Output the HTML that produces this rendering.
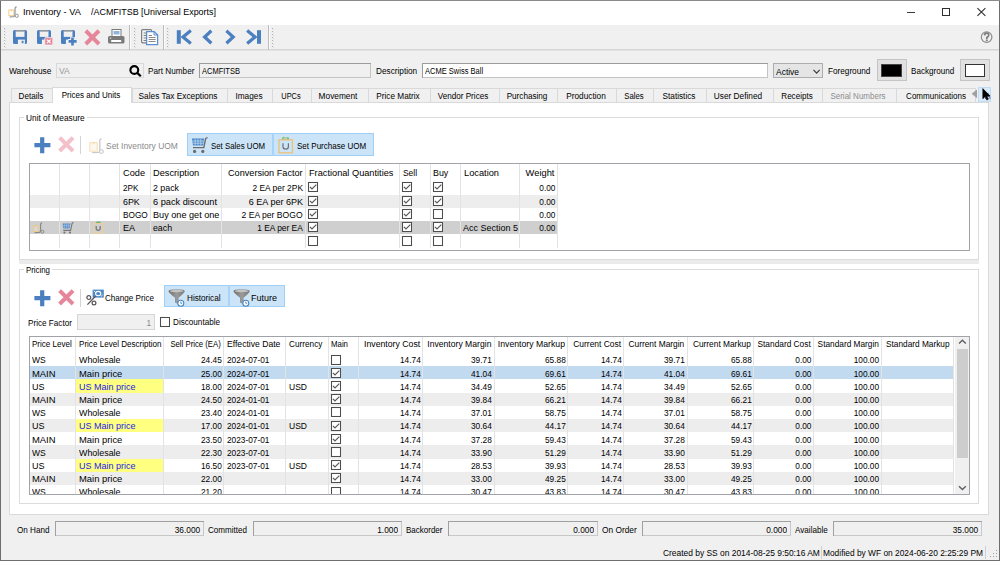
<!DOCTYPE html>
<html><head><meta charset="utf-8"><title>Inventory</title>
<style>
html,body{margin:0;padding:0;width:1000px;height:561px;overflow:hidden;background:#f0f0f0}
body{position:relative;font-family:"Liberation Sans", sans-serif}
.a{position:absolute}
.t{position:absolute;white-space:nowrap;font-family:"Liberation Sans", sans-serif}
svg.a{overflow:visible}
</style></head><body>
<div class="a" style="left:0.00px;top:0.00px;width:1000.00px;height:561.00px;background:#f0f0f0;"></div>
<div class="a" style="left:1.00px;top:1.00px;width:998.00px;height:24.00px;background:#ffffff;"></div>
<svg class="a" style="left:8px;top:6px" width="12" height="13" viewBox="0 0 12 13"><rect x="0.8" y="4" width="5" height="5.6" fill="#fff" stroke="#f5cc85" stroke-width="0.9"/><rect x="2.8" y="3.6" width="1" height="1.6" fill="#f0b860"/><path d="M8.6 1 Q7 1 7 2.8 L7 8.8 Q7 10.2 5.8 10.6 L1.6 10.8" fill="none" stroke="#9a9a9a" stroke-width="1.3"/><circle cx="8.8" cy="9.8" r="1.6" fill="#fff" stroke="#9a9a9a" stroke-width="1"/></svg>
<div class="t" style="top:7.30px;font-size:9.8px;line-height:9.8px;color:#000;transform:scaleX(0.9420);left:23.40px;transform-origin:0 0;">Inventory - VA</div>
<div class="t" style="top:7.30px;font-size:9.8px;line-height:9.8px;color:#000;transform:scaleX(0.9109);left:90.60px;transform-origin:0 0;">/ACMFITSB [Universal Exports]</div>
<div class="a" style="left:907.00px;top:12.00px;width:8.00px;height:1.00px;background:#3a3a3a;"></div>
<div class="a" style="left:942.00px;top:8.00px;width:8.00px;height:8.00px;box-shadow:inset 0 0 0 1px #2e2e2e;"></div>
<svg class="a" style="left:977px;top:8px" width="9" height="8" viewBox="0 0 9 8"><path d="M0.4 0.2 L8.4 7.8 M8.4 0.2 L0.4 7.8" stroke="#2a2a2a" stroke-width="1.05"/></svg>
<div class="a" style="left:0.00px;top:0.00px;width:1.00px;height:561.00px;background:#6e6e6e;"></div>
<div class="a" style="left:999.00px;top:0.00px;width:1.00px;height:561.00px;background:#6e6e6e;"></div>
<div class="a" style="left:0.00px;top:0.00px;width:1000.00px;height:1.00px;background:#8a8a8a;"></div>
<div class="a" style="left:0.00px;top:560.00px;width:1000.00px;height:1.00px;background:#6e6e6e;"></div>
<div class="a" style="left:1.00px;top:25.00px;width:998.00px;height:24.00px;background:#f0f0f0;"></div>
<div class="a" style="left:1.00px;top:49.00px;width:998.00px;height:1.00px;background:#d6d6d6;"></div>
<div class="a" style="left:1.00px;top:50.00px;width:998.00px;height:1.00px;background:#e2e2e2;"></div>
<div class="a" style="left:4.00px;top:28.00px;width:1.00px;height:1.00px;background:#b0b0b0;"></div>
<div class="a" style="left:5.00px;top:29.00px;width:1.00px;height:1.00px;background:#dedede;"></div>
<div class="a" style="left:4.00px;top:31.00px;width:1.00px;height:1.00px;background:#b0b0b0;"></div>
<div class="a" style="left:5.00px;top:32.00px;width:1.00px;height:1.00px;background:#dedede;"></div>
<div class="a" style="left:4.00px;top:34.00px;width:1.00px;height:1.00px;background:#b0b0b0;"></div>
<div class="a" style="left:5.00px;top:35.00px;width:1.00px;height:1.00px;background:#dedede;"></div>
<div class="a" style="left:4.00px;top:37.00px;width:1.00px;height:1.00px;background:#b0b0b0;"></div>
<div class="a" style="left:5.00px;top:38.00px;width:1.00px;height:1.00px;background:#dedede;"></div>
<div class="a" style="left:4.00px;top:40.00px;width:1.00px;height:1.00px;background:#b0b0b0;"></div>
<div class="a" style="left:5.00px;top:41.00px;width:1.00px;height:1.00px;background:#dedede;"></div>
<div class="a" style="left:4.00px;top:43.00px;width:1.00px;height:1.00px;background:#b0b0b0;"></div>
<div class="a" style="left:5.00px;top:44.00px;width:1.00px;height:1.00px;background:#dedede;"></div>
<div class="a" style="left:4.00px;top:46.00px;width:1.00px;height:1.00px;background:#b0b0b0;"></div>
<div class="a" style="left:5.00px;top:47.00px;width:1.00px;height:1.00px;background:#dedede;"></div>
<div class="a" style="left:134.00px;top:28.00px;width:1.00px;height:1.00px;background:#b0b0b0;"></div>
<div class="a" style="left:135.00px;top:29.00px;width:1.00px;height:1.00px;background:#dedede;"></div>
<div class="a" style="left:134.00px;top:31.00px;width:1.00px;height:1.00px;background:#b0b0b0;"></div>
<div class="a" style="left:135.00px;top:32.00px;width:1.00px;height:1.00px;background:#dedede;"></div>
<div class="a" style="left:134.00px;top:34.00px;width:1.00px;height:1.00px;background:#b0b0b0;"></div>
<div class="a" style="left:135.00px;top:35.00px;width:1.00px;height:1.00px;background:#dedede;"></div>
<div class="a" style="left:134.00px;top:37.00px;width:1.00px;height:1.00px;background:#b0b0b0;"></div>
<div class="a" style="left:135.00px;top:38.00px;width:1.00px;height:1.00px;background:#dedede;"></div>
<div class="a" style="left:134.00px;top:40.00px;width:1.00px;height:1.00px;background:#b0b0b0;"></div>
<div class="a" style="left:135.00px;top:41.00px;width:1.00px;height:1.00px;background:#dedede;"></div>
<div class="a" style="left:134.00px;top:43.00px;width:1.00px;height:1.00px;background:#b0b0b0;"></div>
<div class="a" style="left:135.00px;top:44.00px;width:1.00px;height:1.00px;background:#dedede;"></div>
<div class="a" style="left:134.00px;top:46.00px;width:1.00px;height:1.00px;background:#b0b0b0;"></div>
<div class="a" style="left:135.00px;top:47.00px;width:1.00px;height:1.00px;background:#dedede;"></div>
<div class="a" style="left:167.00px;top:28.00px;width:1.00px;height:1.00px;background:#b0b0b0;"></div>
<div class="a" style="left:168.00px;top:29.00px;width:1.00px;height:1.00px;background:#dedede;"></div>
<div class="a" style="left:167.00px;top:31.00px;width:1.00px;height:1.00px;background:#b0b0b0;"></div>
<div class="a" style="left:168.00px;top:32.00px;width:1.00px;height:1.00px;background:#dedede;"></div>
<div class="a" style="left:167.00px;top:34.00px;width:1.00px;height:1.00px;background:#b0b0b0;"></div>
<div class="a" style="left:168.00px;top:35.00px;width:1.00px;height:1.00px;background:#dedede;"></div>
<div class="a" style="left:167.00px;top:37.00px;width:1.00px;height:1.00px;background:#b0b0b0;"></div>
<div class="a" style="left:168.00px;top:38.00px;width:1.00px;height:1.00px;background:#dedede;"></div>
<div class="a" style="left:167.00px;top:40.00px;width:1.00px;height:1.00px;background:#b0b0b0;"></div>
<div class="a" style="left:168.00px;top:41.00px;width:1.00px;height:1.00px;background:#dedede;"></div>
<div class="a" style="left:167.00px;top:43.00px;width:1.00px;height:1.00px;background:#b0b0b0;"></div>
<div class="a" style="left:168.00px;top:44.00px;width:1.00px;height:1.00px;background:#dedede;"></div>
<div class="a" style="left:167.00px;top:46.00px;width:1.00px;height:1.00px;background:#b0b0b0;"></div>
<div class="a" style="left:168.00px;top:47.00px;width:1.00px;height:1.00px;background:#dedede;"></div>
<div class="a" style="left:272.00px;top:28.00px;width:1.00px;height:1.00px;background:#b0b0b0;"></div>
<div class="a" style="left:273.00px;top:29.00px;width:1.00px;height:1.00px;background:#dedede;"></div>
<div class="a" style="left:272.00px;top:31.00px;width:1.00px;height:1.00px;background:#b0b0b0;"></div>
<div class="a" style="left:273.00px;top:32.00px;width:1.00px;height:1.00px;background:#dedede;"></div>
<div class="a" style="left:272.00px;top:34.00px;width:1.00px;height:1.00px;background:#b0b0b0;"></div>
<div class="a" style="left:273.00px;top:35.00px;width:1.00px;height:1.00px;background:#dedede;"></div>
<div class="a" style="left:272.00px;top:37.00px;width:1.00px;height:1.00px;background:#b0b0b0;"></div>
<div class="a" style="left:273.00px;top:38.00px;width:1.00px;height:1.00px;background:#dedede;"></div>
<div class="a" style="left:272.00px;top:40.00px;width:1.00px;height:1.00px;background:#b0b0b0;"></div>
<div class="a" style="left:273.00px;top:41.00px;width:1.00px;height:1.00px;background:#dedede;"></div>
<div class="a" style="left:272.00px;top:43.00px;width:1.00px;height:1.00px;background:#b0b0b0;"></div>
<div class="a" style="left:273.00px;top:44.00px;width:1.00px;height:1.00px;background:#dedede;"></div>
<div class="a" style="left:272.00px;top:46.00px;width:1.00px;height:1.00px;background:#b0b0b0;"></div>
<div class="a" style="left:273.00px;top:47.00px;width:1.00px;height:1.00px;background:#dedede;"></div>
<div class="a" style="left:129.00px;top:25.00px;width:1.00px;height:25.00px;background:#bdbdbd;"></div>
<div class="a" style="left:130.00px;top:25.00px;width:1.00px;height:24.00px;background:#fafafa;"></div>
<div class="a" style="left:163.00px;top:25.00px;width:1.00px;height:25.00px;background:#bdbdbd;"></div>
<div class="a" style="left:164.00px;top:25.00px;width:1.00px;height:24.00px;background:#fafafa;"></div>
<div class="a" style="left:268.00px;top:25.00px;width:1.00px;height:25.00px;background:#bdbdbd;"></div>
<div class="a" style="left:269.00px;top:25.00px;width:1.00px;height:24.00px;background:#fafafa;"></div>
<svg class="a" style="left:13px;top:30px" width="14" height="14" viewBox="0 0 14 14"><rect x="0" y="0" width="14" height="14" rx="1.6" fill="#4a7fc0"/><rect x="2.7" y="0.5" width="8.8" height="6.4" fill="#f0f0f0"/><rect x="2.7" y="0.5" width="8.8" height="1" fill="#7a7a7a"/><rect x="4.9" y="9.6" width="7" height="4.4" fill="#f0f0f0"/><rect x="8.7" y="10.8" width="1.8" height="2.4" fill="#4a7fc0"/></svg>
<svg class="a" style="left:37px;top:30px" width="16" height="15" viewBox="0 0 16 15"><rect x="0" y="0" width="14" height="14" rx="1.6" fill="#4a7fc0"/><rect x="2.7" y="0.5" width="8.8" height="6.4" fill="#f0f0f0"/><rect x="2.7" y="0.5" width="8.8" height="1" fill="#7a7a7a"/><rect x="4.9" y="9.6" width="7" height="4.4" fill="#f0f0f0"/><rect x="7.8" y="7.6" width="8" height="7.4" rx="0.8" fill="#e9869b" stroke="#f0f0f0" stroke-width="0.8"/><path d="M10 9.6 L13.6 13 M13.6 9.6 L10 13" stroke="#fff" stroke-width="1.2"/></svg>
<svg class="a" style="left:61px;top:30px" width="16" height="16" viewBox="0 0 16 16"><rect x="0" y="0" width="14" height="14" rx="1.6" fill="#4a7fc0"/><rect x="2.7" y="0.5" width="8.8" height="6.4" fill="#f0f0f0"/><rect x="2.7" y="0.5" width="8.8" height="1" fill="#7a7a7a"/><rect x="4.9" y="9.6" width="7" height="4.4" fill="#f0f0f0"/><path d="M7 11.4 H16 M11.5 6.9 V16" stroke="#f0f0f0" stroke-width="4.6"/><path d="M7.6 11.4 H15.6 M11.5 7.4 V15.6" stroke="#4a7fc0" stroke-width="2.6"/></svg>
<svg class="a" style="left:85px;top:30px" width="15" height="15" viewBox="0 0 15 15"><path d="M2.2 2.2 L12.6 12.6 M12.6 2.2 L2.2 12.6" stroke="#e6869b" stroke-width="4" stroke-linecap="square"/></svg>
<svg class="a" style="left:108px;top:29px" width="17" height="15" viewBox="0 0 17 15"><rect x="4" y="0.5" width="9" height="7" fill="#fff" stroke="#7a7a7a" stroke-width="1"/><rect x="5.5" y="2" width="6" height="3.5" fill="#8fb4dd"/><rect x="0" y="7" width="16.5" height="7.6" rx="1.6" fill="#7a7a7a"/><rect x="3.2" y="11" width="10" height="2" fill="#fff"/><rect x="2" y="8.6" width="1.2" height="1" fill="#fff"/></svg>
<svg class="a" style="left:141px;top:29px" width="18" height="17" viewBox="0 0 18 17"><rect x="0.6" y="0.6" width="10" height="13.2" rx="1" fill="#f4f4f4" stroke="#808080" stroke-width="1.2"/><path d="M2.6 4 H5 M2.6 6.5 H5 M2.6 9 H5 M2.6 11.5 H5" stroke="#808080" stroke-width="1"/><path d="M5.6 2.6 H13.2 L16.6 6 V15.6 H5.6 Z" fill="#fff" stroke="#5b8fcd" stroke-width="1.3"/><path d="M13 2.6 V6 H16.6" fill="none" stroke="#5b8fcd" stroke-width="1"/><path d="M7.6 6.5 H11 M7.6 8.5 H14.6 M7.6 10.5 H14.6 M7.6 12.5 H14.6" stroke="#8a8a8a" stroke-width="1.1"/></svg>
<svg class="a" style="left:176px;top:30px" width="16" height="14" viewBox="0 0 16 14"><rect x="0.8" y="0.2" width="4" height="13.6" fill="#4a7fc0"/><path d="M13.6 1.6 L7 7 L13.6 12.4" fill="none" stroke="#4a7fc0" stroke-width="3.2" stroke-linecap="square"/></svg>
<svg class="a" style="left:201px;top:30px" width="12" height="14" viewBox="0 0 12 14"><path d="M9.2 1.8 L3.6 7 L9.2 12.2" fill="none" stroke="#4a7fc0" stroke-width="3.2" stroke-linecap="square"/></svg>
<svg class="a" style="left:225px;top:30px" width="12" height="14" viewBox="0 0 12 14"><path d="M2.6 1.8 L8.2 7 L2.6 12.2" fill="none" stroke="#4a7fc0" stroke-width="3.2" stroke-linecap="square"/></svg>
<svg class="a" style="left:246px;top:30px" width="16" height="14" viewBox="0 0 16 14"><rect x="11" y="0.2" width="4" height="13.6" fill="#4a7fc0"/><path d="M2.4 1.6 L9 7 L2.4 12.4" fill="none" stroke="#4a7fc0" stroke-width="3.2" stroke-linecap="square"/></svg>
<svg class="a" style="left:980px;top:30px" width="14" height="14" viewBox="0 0 14 14"><circle cx="6.6" cy="7.1" r="5.3" fill="none" stroke="#8c8c8c" stroke-width="1.2"/><path d="M4.6 5.4 Q4.6 3.2 6.7 3.2 Q8.8 3.2 8.7 5.2 Q8.6 6.6 6.8 7.5 V9" fill="none" stroke="#7c7c7c" stroke-width="1.7"/><rect x="5.9" y="9.5" width="1.8" height="1.6" fill="#7c7c7c"/></svg>
<div class="t" style="top:67.31px;font-size:9.2px;line-height:9.2px;color:#000;transform:scaleX(0.9100);left:9.00px;transform-origin:0 0;">Warehouse</div>
<div class="a" style="left:56.00px;top:63.00px;width:87.50px;height:14.70px;background:#f0f0f0;box-shadow:inset 0 0 0 1px #d9d9d9;"></div>
<div class="t" style="top:67.31px;font-size:9.2px;line-height:9.2px;color:#9a9a9a;transform:scaleX(0.9323);left:58.50px;transform-origin:0 0;">VA</div>
<svg class="a" style="left:129px;top:65px" width="13" height="12" viewBox="0 0 13 12"><circle cx="5.3" cy="5" r="3.9" fill="none" stroke="#000" stroke-width="2.1"/><path d="M8.2 7.9 L11.8 11.3" stroke="#000" stroke-width="2.2"/></svg>
<div class="t" style="top:67.31px;font-size:9.2px;line-height:9.2px;color:#000;transform:scaleX(0.8917);left:147.50px;transform-origin:0 0;">Part Number</div>
<div class="a" style="left:199.00px;top:63.00px;width:172.30px;height:15.20px;background:#f0f0f0;box-shadow:inset 1px 1px 0 #9c9c9c, inset -1px -1px 0 #c4c4c4;"></div>
<div class="t" style="top:67.31px;font-size:9.2px;line-height:9.2px;color:#000;transform:scaleX(0.8170);left:201.50px;transform-origin:0 0;">ACMFITSB</div>
<div class="t" style="top:67.31px;font-size:9.2px;line-height:9.2px;color:#000;transform:scaleX(0.8953);left:375.80px;transform-origin:0 0;">Description</div>
<div class="a" style="left:422.00px;top:63.00px;width:346.20px;height:15.00px;background:#ffffff;box-shadow:inset 1px 1px 0 #9c9c9c, inset -1px -1px 0 #c4c4c4;"></div>
<div class="t" style="top:67.31px;font-size:9.2px;line-height:9.2px;color:#000;transform:scaleX(0.8190);left:424.50px;transform-origin:0 0;">ACME Swiss Ball</div>
<div class="a" style="left:773.00px;top:63.00px;width:50.00px;height:14.80px;background:#e5e5e5;box-shadow:inset 0 0 0 1px #adadad;"></div>
<div class="t" style="top:67.51px;font-size:9.2px;line-height:9.2px;color:#000;transform:scaleX(0.9221);left:775.80px;transform-origin:0 0;">Active</div>
<svg class="a" style="left:812.5px;top:68.6px" width="8" height="6" viewBox="0 0 8 6"><path d="M0.5 0.8 L3.6 4.2 L6.7 0.8" fill="none" stroke="#3c3c3c" stroke-width="1.15"/></svg>
<div class="t" style="top:67.31px;font-size:9.2px;line-height:9.2px;color:#000;transform:scaleX(0.8915);left:828.00px;transform-origin:0 0;">Foreground</div>
<div class="a" style="left:877.00px;top:59.30px;width:29.50px;height:21.70px;background:#e1e1e1;box-shadow:inset 0 0 0 1px #c4c4c4;"></div>
<div class="a" style="left:881.00px;top:64.00px;width:21.00px;height:12.80px;background:#000;box-shadow:inset 0 0 0 1px #444;"></div>
<div class="t" style="top:67.31px;font-size:9.2px;line-height:9.2px;color:#000;transform:scaleX(0.8799);left:910.60px;transform-origin:0 0;">Background</div>
<div class="a" style="left:960.20px;top:59.30px;width:29.60px;height:21.70px;background:#e1e1e1;box-shadow:inset 0 0 0 1px #c4c4c4;"></div>
<div class="a" style="left:964.60px;top:64.00px;width:20.80px;height:13.00px;background:#fff;box-shadow:inset 0 0 0 1px #333;"></div>
<div class="a" style="left:9.00px;top:102.00px;width:980.00px;height:413.00px;background:#fff;box-shadow:inset 0 0 0 1px #dadada;"></div>
<div class="a" style="left:11.00px;top:88.00px;width:42.00px;height:15.00px;background:#f0f0f0;box-shadow:inset 0 0 0 1px #d9d9d9;"></div>
<div class="a" style="left:132.00px;top:88.00px;width:96.00px;height:15.00px;background:#f0f0f0;box-shadow:inset 0 0 0 1px #d9d9d9;"></div>
<div class="a" style="left:227.00px;top:88.00px;width:46.00px;height:15.00px;background:#f0f0f0;box-shadow:inset 0 0 0 1px #d9d9d9;"></div>
<div class="a" style="left:272.00px;top:88.00px;width:40.00px;height:15.00px;background:#f0f0f0;box-shadow:inset 0 0 0 1px #d9d9d9;"></div>
<div class="a" style="left:311.00px;top:88.00px;width:58.00px;height:15.00px;background:#f0f0f0;box-shadow:inset 0 0 0 1px #d9d9d9;"></div>
<div class="a" style="left:368.00px;top:88.00px;width:63.00px;height:15.00px;background:#f0f0f0;box-shadow:inset 0 0 0 1px #d9d9d9;"></div>
<div class="a" style="left:430.00px;top:88.00px;width:70.00px;height:15.00px;background:#f0f0f0;box-shadow:inset 0 0 0 1px #d9d9d9;"></div>
<div class="a" style="left:499.00px;top:88.00px;width:59.00px;height:15.00px;background:#f0f0f0;box-shadow:inset 0 0 0 1px #d9d9d9;"></div>
<div class="a" style="left:557.00px;top:88.00px;width:60.00px;height:15.00px;background:#f0f0f0;box-shadow:inset 0 0 0 1px #d9d9d9;"></div>
<div class="a" style="left:616.00px;top:88.00px;width:38.00px;height:15.00px;background:#f0f0f0;box-shadow:inset 0 0 0 1px #d9d9d9;"></div>
<div class="a" style="left:653.00px;top:88.00px;width:54.00px;height:15.00px;background:#f0f0f0;box-shadow:inset 0 0 0 1px #d9d9d9;"></div>
<div class="a" style="left:706.00px;top:88.00px;width:68.00px;height:15.00px;background:#f0f0f0;box-shadow:inset 0 0 0 1px #d9d9d9;"></div>
<div class="a" style="left:773.00px;top:88.00px;width:50.00px;height:15.00px;background:#f0f0f0;box-shadow:inset 0 0 0 1px #d9d9d9;"></div>
<div class="a" style="left:822.00px;top:88.00px;width:75.00px;height:15.00px;background:#f0f0f0;box-shadow:inset 0 0 0 1px #d9d9d9;"></div>
<div class="a" style="left:896.00px;top:88.00px;width:82.00px;height:15.00px;background:#f0f0f0;box-shadow:inset 0 0 0 1px #d9d9d9;"></div>
<div class="t" style="top:91.61px;font-size:9.2px;line-height:9.2px;color:#000;transform:scaleX(0.8819);left:-119.20px;width:300px;text-align:center;transform-origin:50% 0;">Details</div>
<div class="a" style="left:52.00px;top:87.00px;width:80.00px;height:16.00px;background:#fff;box-shadow:inset 0 0 0 1px #d9d9d9;"></div>
<div class="a" style="left:53.00px;top:101.00px;width:78.00px;height:2.50px;background:#fff;"></div>
<div class="t" style="top:91.21px;font-size:9.2px;line-height:9.2px;color:#000;transform:scaleX(0.8749);left:-59.05px;width:300px;text-align:center;transform-origin:50% 0;">Prices and Units</div>
<div class="t" style="top:91.61px;font-size:9.2px;line-height:9.2px;color:#000;transform:scaleX(0.9052);left:28.25px;width:300px;text-align:center;transform-origin:50% 0;">Sales Tax Exceptions</div>
<div class="t" style="top:91.61px;font-size:9.2px;line-height:9.2px;color:#000;transform:scaleX(0.8983);left:98.75px;width:300px;text-align:center;transform-origin:50% 0;">Images</div>
<div class="t" style="top:91.61px;font-size:9.2px;line-height:9.2px;color:#000;transform:scaleX(0.8075);left:140.80px;width:300px;text-align:center;transform-origin:50% 0;">UPCs</div>
<div class="t" style="top:91.61px;font-size:9.2px;line-height:9.2px;color:#000;transform:scaleX(0.9034);left:188.40px;width:300px;text-align:center;transform-origin:50% 0;">Movement</div>
<div class="t" style="top:91.61px;font-size:9.2px;line-height:9.2px;color:#000;transform:scaleX(0.8958);left:247.90px;width:300px;text-align:center;transform-origin:50% 0;">Price Matrix</div>
<div class="t" style="top:91.61px;font-size:9.2px;line-height:9.2px;color:#000;transform:scaleX(0.8835);left:313.45px;width:300px;text-align:center;transform-origin:50% 0;">Vendor Prices</div>
<div class="t" style="top:91.61px;font-size:9.2px;line-height:9.2px;color:#000;transform:scaleX(0.8843);left:377.30px;width:300px;text-align:center;transform-origin:50% 0;">Purchasing</div>
<div class="t" style="top:91.61px;font-size:9.2px;line-height:9.2px;color:#000;transform:scaleX(0.9004);left:435.65px;width:300px;text-align:center;transform-origin:50% 0;">Production</div>
<div class="t" style="top:91.61px;font-size:9.2px;line-height:9.2px;color:#000;transform:scaleX(0.8430);left:483.60px;width:300px;text-align:center;transform-origin:50% 0;">Sales</div>
<div class="t" style="top:91.61px;font-size:9.2px;line-height:9.2px;color:#000;transform:scaleX(0.8965);left:528.60px;width:300px;text-align:center;transform-origin:50% 0;">Statistics</div>
<div class="t" style="top:91.61px;font-size:9.2px;line-height:9.2px;color:#000;transform:scaleX(0.9015);left:588.45px;width:300px;text-align:center;transform-origin:50% 0;">User Defined</div>
<div class="t" style="top:91.61px;font-size:9.2px;line-height:9.2px;color:#000;transform:scaleX(0.8773);left:646.50px;width:300px;text-align:center;transform-origin:50% 0;">Receipts</div>
<div class="t" style="top:91.61px;font-size:9.2px;line-height:9.2px;color:#8d8d8d;transform:scaleX(0.8723);left:708.00px;width:300px;text-align:center;transform-origin:50% 0;">Serial Numbers</div>
<div class="t" style="top:91.61px;font-size:9.2px;line-height:9.2px;color:#000;transform:scaleX(0.8743);left:785.70px;width:300px;text-align:center;transform-origin:50% 0;">Communications</div>
<div class="a" style="left:975.00px;top:88.00px;width:1.00px;height:14.00px;background:#d9d9d9;"></div>
<div class="a" style="left:976.00px;top:88.00px;width:2.00px;height:14.00px;background:#f0f0f0;"></div>
<svg class="a" style="left:971px;top:89px" width="7" height="10" viewBox="0 0 7 10"><path d="M6 0.4 V9.2 L0.6 4.8 Z" fill="#a0a0a0"/></svg>
<div class="a" style="left:978.00px;top:87.00px;width:13.00px;height:15.00px;background:#d9eaf9;box-shadow:inset 0 0 0 1px #c2dcf3;"></div>
<div class="t" style="top:92.41px;font-size:9.2px;line-height:9.2px;color:#1a3a9a;transform:scaleX(0.8804);left:984.50px;transform-origin:0 0;">Ac</div>
<svg class="a" style="left:982px;top:88px" width="9" height="13" viewBox="0 0 9 13"><path d="M0.8 0.6 V10.8 L3.2 8.6 L4.8 12 L6.4 11.2 L4.8 8 H8 Z" fill="#000" stroke="#000" stroke-width="0.6" stroke-linejoin="round"/></svg>
<div class="a" style="left:991.00px;top:86.00px;width:8.00px;height:17.00px;background:#f0f0f0;"></div>
<div class="a" style="left:19.00px;top:117.00px;width:960.40px;height:142.80px;box-shadow:inset 0 0 0 1px #dcdcdc;"></div>
<div class="a" style="left:24.00px;top:112.00px;width:63.00px;height:10.00px;background:#fff;"></div>
<div class="t" style="top:113.61px;font-size:9.2px;line-height:9.2px;color:#000;transform:scaleX(0.9055);left:26.00px;transform-origin:0 0;">Unit of Measure</div>
<div class="a" style="left:19.20px;top:260.20px;width:960.20px;height:3.60px;background:#ebebeb;"></div>
<div class="a" style="left:19.20px;top:269.40px;width:960.20px;height:234.80px;box-shadow:inset 0 0 0 1px #dcdcdc;"></div>
<div class="a" style="left:24.00px;top:264.00px;width:28.00px;height:10.00px;background:#fff;"></div>
<div class="t" style="top:265.81px;font-size:9.2px;line-height:9.2px;color:#000;transform:scaleX(0.8535);left:25.80px;transform-origin:0 0;">Pricing</div>
<svg class="a" style="left:33.8px;top:136.5px" width="17" height="17" viewBox="0 0 17 17"><path d="M0.4 8.2 H16.4 M8.2 0.3 V16.3" stroke="#4a7fc0" stroke-width="4.2"/></svg>
<svg class="a" style="left:58.6px;top:137.4px" width="15" height="15" viewBox="0 0 15 15"><path d="M2 2 L12.6 12.6 M12.6 2 L2 12.6" stroke="#f3c0cb" stroke-width="4" stroke-linecap="square"/></svg>
<div class="a" style="left:80.00px;top:136.00px;width:1.00px;height:18.00px;background:#d4d4d4;"></div>
<svg class="a" style="left:89px;top:138px" width="16" height="17" viewBox="0 0 16 17"><rect x="0.8" y="4.6" width="7.4" height="8.6" fill="#fdf8ee" stroke="#f4dfb6" stroke-width="1"/><rect x="3.8" y="4.6" width="1.4" height="1.6" fill="#f4d9a0"/><path d="M12.6 0.8 Q10.8 0.8 10.8 2.6 L10.8 12.4 Q10.8 14 9.4 14.4 L3.2 14.6" fill="none" stroke="#c8c8c8" stroke-width="1.3"/><circle cx="12.4" cy="13.6" r="1.9" fill="#fff" stroke="#c8c8c8" stroke-width="1.1"/></svg>
<div class="t" style="top:141.81px;font-size:9.2px;line-height:9.2px;color:#8a8a8a;transform:scaleX(0.9204);left:106.30px;transform-origin:0 0;">Set Inventory UOM</div>
<div class="a" style="left:186.90px;top:133.00px;width:85.90px;height:22.60px;background:#cce4f7;box-shadow:inset 0 0 0 1px #9fcff7;"></div>
<div class="a" style="left:272.40px;top:133.00px;width:101.50px;height:22.60px;background:#cce4f7;box-shadow:inset 0 0 0 1px #9fcff7;"></div>
<div class="a" style="left:272.00px;top:133.00px;width:2.00px;height:22.60px;background:#a6d3f9;"></div>
<svg class="a" style="left:191px;top:137px" width="18" height="17" viewBox="0 0 18 17"><path d="M1 1.6 H13 L12 8.6 H2 Z" fill="#4a86c5"/><path d="M4.2 2 V8.4 M7 2 V8.4 M9.8 2 V8.4 M1.4 4 H12.8 M1.7 6.2 H12.4" stroke="#cce4f7" stroke-width="0.7"/><path d="M2 10.6 H12.8 L14.6 1.8 Q15 0.6 16.6 0.6" fill="none" stroke="#6b6b6b" stroke-width="1.4"/><circle cx="3.6" cy="14.4" r="1.6" fill="#6b6b6b"/><circle cx="11.8" cy="14.4" r="1.6" fill="#6b6b6b"/></svg>
<div class="t" style="top:141.81px;font-size:9.2px;line-height:9.2px;color:#000;transform:scaleX(0.8549);left:210.50px;transform-origin:0 0;">Set Sales UOM</div>
<svg class="a" style="left:278px;top:136px" width="16" height="18" viewBox="0 0 16 18"><path d="M3.6 3.8 L5 0.8 L10.6 1.4 L11.4 3.8 Z" fill="#6fae72"/><rect x="5.6" y="1.4" width="3.6" height="1.4" fill="#c8e2c8"/><rect x="1" y="3.8" width="13.4" height="13" fill="none" stroke="#eac27a" stroke-width="1.3"/><path d="M5 7.2 V10.8 Q5 13.2 7.7 13.2 Q10.4 13.2 10.4 10.8 V7.2" fill="none" stroke="#707070" stroke-width="1.2"/></svg>
<div class="t" style="top:141.81px;font-size:9.2px;line-height:9.2px;color:#000;transform:scaleX(0.8745);left:296.60px;transform-origin:0 0;">Set Purchase UOM</div>
<div class="a" style="left:29.00px;top:163.00px;width:941.00px;height:88.00px;background:#fff;box-shadow:inset 0 0 0 1px #a0a3a8;"></div>
<div class="a" style="left:30.00px;top:194.50px;width:527.30px;height:13.30px;background:#ededed;"></div>
<div class="a" style="left:30.00px;top:221.10px;width:527.30px;height:13.30px;background:#cfcfcf;"></div>
<div class="a" style="left:59.40px;top:164.00px;width:1.00px;height:84.00px;background:#e3e3e3;"></div>
<div class="a" style="left:89.40px;top:164.00px;width:1.00px;height:84.00px;background:#e3e3e3;"></div>
<div class="a" style="left:119.40px;top:164.00px;width:1.00px;height:84.00px;background:#e3e3e3;"></div>
<div class="a" style="left:150.00px;top:164.00px;width:1.00px;height:84.00px;background:#e3e3e3;"></div>
<div class="a" style="left:221.40px;top:164.00px;width:1.00px;height:84.00px;background:#e3e3e3;"></div>
<div class="a" style="left:305.00px;top:164.00px;width:1.00px;height:84.00px;background:#e3e3e3;"></div>
<div class="a" style="left:399.40px;top:164.00px;width:1.00px;height:84.00px;background:#e3e3e3;"></div>
<div class="a" style="left:429.60px;top:164.00px;width:1.00px;height:84.00px;background:#e3e3e3;"></div>
<div class="a" style="left:459.80px;top:164.00px;width:1.00px;height:84.00px;background:#e3e3e3;"></div>
<div class="a" style="left:519.10px;top:164.00px;width:1.00px;height:84.00px;background:#e3e3e3;"></div>
<div class="a" style="left:557.30px;top:164.00px;width:1.00px;height:84.00px;background:#e3e3e3;"></div>
<div class="t" style="top:167.76px;font-size:9.5px;line-height:9.5px;color:#000;transform:scaleX(0.9688);left:122.60px;transform-origin:0 0;">Code</div>
<div class="t" style="top:167.76px;font-size:9.5px;line-height:9.5px;color:#000;transform:scaleX(0.9723);left:153.00px;transform-origin:0 0;">Description</div>
<div class="t" style="top:167.76px;font-size:9.5px;line-height:9.5px;color:#000;transform:scaleX(0.9612);right:697.20px;text-align:right;transform-origin:100% 0;">Conversion Factor</div>
<div class="t" style="top:167.76px;font-size:9.5px;line-height:9.5px;color:#000;transform:scaleX(0.9688);left:308.60px;transform-origin:0 0;">Fractional Quantities</div>
<div class="t" style="top:167.76px;font-size:9.5px;line-height:9.5px;color:#000;transform:scaleX(0.8838);left:403.00px;transform-origin:0 0;">Sell</div>
<div class="t" style="top:167.76px;font-size:9.5px;line-height:9.5px;color:#000;transform:scaleX(0.9347);left:433.20px;transform-origin:0 0;">Buy</div>
<div class="t" style="top:167.76px;font-size:9.5px;line-height:9.5px;color:#000;transform:scaleX(0.9745);left:463.60px;transform-origin:0 0;">Location</div>
<div class="t" style="top:167.76px;font-size:9.5px;line-height:9.5px;color:#000;transform:scaleX(0.9798);right:445.20px;text-align:right;transform-origin:100% 0;">Weight</div>
<div class="t" style="top:183.36px;font-size:9.5px;line-height:9.5px;color:#000;transform:scaleX(0.8576);left:122.60px;transform-origin:0 0;">2PK</div>
<div class="t" style="top:183.36px;font-size:9.5px;line-height:9.5px;color:#000;transform:scaleX(0.9290);left:153.00px;transform-origin:0 0;">2 pack</div>
<div class="t" style="top:183.36px;font-size:9.5px;line-height:9.5px;color:#000;transform:scaleX(0.8872);right:697.20px;text-align:right;transform-origin:100% 0;">2 EA per 2PK</div>
<svg class="a" style="left:308px;top:182.39999999999998px" width="10" height="10" viewBox="0 0 10 10"><rect x="0.5" y="0.5" width="9" height="9" fill="#fff" stroke="#4d4d4d" stroke-width="1.05"/><path d="M1.9 4.9 L4 7 L8.3 2.7" fill="none" stroke="#595959" stroke-width="1.2"/></svg>
<svg class="a" style="left:402.4px;top:182.39999999999998px" width="10" height="10" viewBox="0 0 10 10"><rect x="0.5" y="0.5" width="9" height="9" fill="#fff" stroke="#4d4d4d" stroke-width="1.05"/><path d="M1.9 4.9 L4 7 L8.3 2.7" fill="none" stroke="#595959" stroke-width="1.2"/></svg>
<svg class="a" style="left:432.6px;top:182.39999999999998px" width="10" height="10" viewBox="0 0 10 10"><rect x="0.5" y="0.5" width="9" height="9" fill="#fff" stroke="#4d4d4d" stroke-width="1.05"/><path d="M1.9 4.9 L4 7 L8.3 2.7" fill="none" stroke="#595959" stroke-width="1.2"/></svg>
<div class="t" style="top:183.36px;font-size:9.5px;line-height:9.5px;color:#000;transform:scaleX(0.8737);right:444.20px;text-align:right;transform-origin:100% 0;">0.00</div>
<div class="t" style="top:196.66px;font-size:9.5px;line-height:9.5px;color:#000;transform:scaleX(0.9331);left:122.60px;transform-origin:0 0;">6PK</div>
<div class="t" style="top:196.66px;font-size:9.5px;line-height:9.5px;color:#000;transform:scaleX(0.9696);left:153.00px;transform-origin:0 0;">6 pack discount</div>
<div class="t" style="top:196.66px;font-size:9.5px;line-height:9.5px;color:#000;transform:scaleX(0.9511);right:697.20px;text-align:right;transform-origin:100% 0;">6 EA per 6PK</div>
<svg class="a" style="left:308px;top:195.7px" width="10" height="10" viewBox="0 0 10 10"><rect x="0.5" y="0.5" width="9" height="9" fill="#fff" stroke="#4d4d4d" stroke-width="1.05"/><path d="M1.9 4.9 L4 7 L8.3 2.7" fill="none" stroke="#595959" stroke-width="1.2"/></svg>
<svg class="a" style="left:402.4px;top:195.7px" width="10" height="10" viewBox="0 0 10 10"><rect x="0.5" y="0.5" width="9" height="9" fill="#fff" stroke="#4d4d4d" stroke-width="1.05"/><path d="M1.9 4.9 L4 7 L8.3 2.7" fill="none" stroke="#595959" stroke-width="1.2"/></svg>
<svg class="a" style="left:432.6px;top:195.7px" width="10" height="10" viewBox="0 0 10 10"><rect x="0.5" y="0.5" width="9" height="9" fill="#fff" stroke="#4d4d4d" stroke-width="1.05"/><path d="M1.9 4.9 L4 7 L8.3 2.7" fill="none" stroke="#595959" stroke-width="1.2"/></svg>
<div class="t" style="top:196.66px;font-size:9.5px;line-height:9.5px;color:#000;transform:scaleX(0.8737);right:444.20px;text-align:right;transform-origin:100% 0;">0.00</div>
<div class="t" style="top:209.96px;font-size:9.5px;line-height:9.5px;color:#000;transform:scaleX(0.8700);left:122.60px;transform-origin:0 0;">BOGO</div>
<div class="t" style="top:209.96px;font-size:9.5px;line-height:9.5px;color:#000;transform:scaleX(0.9597);left:153.00px;transform-origin:0 0;">Buy one get one</div>
<div class="t" style="top:209.96px;font-size:9.5px;line-height:9.5px;color:#000;transform:scaleX(0.9026);right:697.20px;text-align:right;transform-origin:100% 0;">2 EA per BOGO</div>
<svg class="a" style="left:308px;top:208.99999999999997px" width="10" height="10" viewBox="0 0 10 10"><rect x="0.5" y="0.5" width="9" height="9" fill="#fff" stroke="#4d4d4d" stroke-width="1.05"/><path d="M1.9 4.9 L4 7 L8.3 2.7" fill="none" stroke="#595959" stroke-width="1.2"/></svg>
<svg class="a" style="left:402.4px;top:208.99999999999997px" width="10" height="10" viewBox="0 0 10 10"><rect x="0.5" y="0.5" width="9" height="9" fill="#fff" stroke="#4d4d4d" stroke-width="1.05"/><path d="M1.9 4.9 L4 7 L8.3 2.7" fill="none" stroke="#595959" stroke-width="1.2"/></svg>
<svg class="a" style="left:432.6px;top:208.99999999999997px" width="10" height="10" viewBox="0 0 10 10"><rect x="0.5" y="0.5" width="9" height="9" fill="#fff" stroke="#4d4d4d" stroke-width="1.05"/></svg>
<div class="t" style="top:209.96px;font-size:9.5px;line-height:9.5px;color:#000;transform:scaleX(0.8737);right:444.20px;text-align:right;transform-origin:100% 0;">0.00</div>
<div class="t" style="top:223.26px;font-size:9.5px;line-height:9.5px;color:#000;transform:scaleX(0.9579);left:122.60px;transform-origin:0 0;">EA</div>
<div class="t" style="top:223.26px;font-size:9.5px;line-height:9.5px;color:#000;transform:scaleX(0.9224);left:153.00px;transform-origin:0 0;">each</div>
<div class="t" style="top:223.26px;font-size:9.5px;line-height:9.5px;color:#000;transform:scaleX(0.8811);right:697.20px;text-align:right;transform-origin:100% 0;">1 EA per EA</div>
<svg class="a" style="left:308px;top:222.29999999999998px" width="10" height="10" viewBox="0 0 10 10"><rect x="0.5" y="0.5" width="9" height="9" fill="#fff" stroke="#4d4d4d" stroke-width="1.05"/><path d="M1.9 4.9 L4 7 L8.3 2.7" fill="none" stroke="#595959" stroke-width="1.2"/></svg>
<svg class="a" style="left:402.4px;top:222.29999999999998px" width="10" height="10" viewBox="0 0 10 10"><rect x="0.5" y="0.5" width="9" height="9" fill="#fff" stroke="#4d4d4d" stroke-width="1.05"/><path d="M1.9 4.9 L4 7 L8.3 2.7" fill="none" stroke="#595959" stroke-width="1.2"/></svg>
<svg class="a" style="left:432.6px;top:222.29999999999998px" width="10" height="10" viewBox="0 0 10 10"><rect x="0.5" y="0.5" width="9" height="9" fill="#fff" stroke="#4d4d4d" stroke-width="1.05"/><path d="M1.9 4.9 L4 7 L8.3 2.7" fill="none" stroke="#595959" stroke-width="1.2"/></svg>
<div class="t" style="top:223.26px;font-size:9.5px;line-height:9.5px;color:#000;transform:scaleX(0.9452);left:463.00px;transform-origin:0 0;">Acc Section 5</div>
<div class="t" style="top:223.26px;font-size:9.5px;line-height:9.5px;color:#000;transform:scaleX(0.8737);right:444.20px;text-align:right;transform-origin:100% 0;">0.00</div>
<svg class="a" style="left:308px;top:235.59999999999997px" width="10" height="10" viewBox="0 0 10 10"><rect x="0.5" y="0.5" width="9" height="9" fill="#fff" stroke="#4d4d4d" stroke-width="1.05"/></svg>
<svg class="a" style="left:402.4px;top:235.59999999999997px" width="10" height="10" viewBox="0 0 10 10"><rect x="0.5" y="0.5" width="9" height="9" fill="#fff" stroke="#4d4d4d" stroke-width="1.05"/></svg>
<svg class="a" style="left:432.6px;top:235.59999999999997px" width="10" height="10" viewBox="0 0 10 10"><rect x="0.5" y="0.5" width="9" height="9" fill="#fff" stroke="#4d4d4d" stroke-width="1.05"/></svg>
<svg class="a" style="left:33px;top:222.1px" width="12" height="12" viewBox="0 0 12 12"><rect x="0.6" y="3.8" width="4.6" height="5.8" fill="#d8d8d8" stroke="#f0c878" stroke-width="0.9"/><rect x="2.4" y="3.4" width="1" height="1.2" fill="#f0c070"/><path d="M9.2 0.8 Q7.6 0.8 7.6 2.6 L7.6 8.6 Q7.6 10 6.4 10.4 L1.6 10.6" fill="none" stroke="#8a8a8a" stroke-width="1.2"/><circle cx="9.4" cy="9.8" r="1.5" fill="none" stroke="#8a8a8a" stroke-width="1"/></svg>
<svg class="a" style="left:62px;top:222.1px" width="12" height="12" viewBox="0 0 12 12"><path d="M0.6 1.4 H8.4 L7.6 6.6 H1.4 Z" fill="#5a8fc8"/><path d="M2.6 1.8 V6.4 M4.6 1.8 V6.4 M6.6 1.8 V6.4 M0.9 3.6 H8.1" stroke="#a9c6e6" stroke-width="0.6"/><path d="M1.2 8.4 H8.6 L10 1.6 Q10.3 0.6 11.4 0.6" fill="none" stroke="#777" stroke-width="1.1"/><circle cx="2.4" cy="10.6" r="1.1" fill="#777"/><circle cx="8" cy="10.6" r="1.1" fill="#777"/></svg>
<svg class="a" style="left:93px;top:221.1px" width="11" height="13" viewBox="0 0 11 13"><path d="M2.6 2.6 L3.6 0.4 L7.4 0.8 L8 2.6 Z" fill="#74b07a"/><rect x="0.8" y="2.6" width="8.8" height="9.4" fill="none" stroke="#f0cf90" stroke-width="1"/><path d="M3.2 5 V7.6 Q3.2 9.4 5.2 9.4 Q7.2 9.4 7.2 7.6 V5" fill="none" stroke="#7a7a7a" stroke-width="1.3"/></svg>
<svg class="a" style="left:33.9px;top:289.6px" width="17" height="17" viewBox="0 0 17 17"><path d="M0.4 8.2 H16.4 M8.2 0.3 V16.3" stroke="#4a7fc0" stroke-width="4.2"/></svg>
<svg class="a" style="left:58.8px;top:290px" width="15" height="15" viewBox="0 0 15 15"><path d="M2 2 L12.6 12.6 M12.6 2 L2 12.6" stroke="#e6869b" stroke-width="4" stroke-linecap="square"/></svg>
<div class="a" style="left:80.00px;top:289.00px;width:1.00px;height:18.00px;background:#d4d4d4;"></div>
<svg class="a" style="left:86px;top:289px" width="19" height="17" viewBox="0 0 19 17"><rect x="6.6" y="0.6" width="11.2" height="8" fill="#4f8ac6"/><ellipse cx="12.2" cy="4.6" rx="2.6" ry="2.2" fill="none" stroke="#fff" stroke-width="1.1"/><path d="M7.8 1.8 L9.4 3.2 M16.6 6 L15 7.4" stroke="#fff" stroke-width="0.9"/><circle cx="2.8" cy="8.6" r="1.9" fill="#fff" stroke="#555" stroke-width="1.2"/><circle cx="8" cy="14" r="1.9" fill="#fff" stroke="#555" stroke-width="1.2"/><path d="M1.4 15.6 L9.4 7.2" stroke="#555" stroke-width="1.3"/></svg>
<div class="t" style="top:293.81px;font-size:9.2px;line-height:9.2px;color:#000;transform:scaleX(0.8809);left:105.40px;transform-origin:0 0;">Change Price</div>
<div class="a" style="left:163.60px;top:285.40px;width:65.40px;height:21.90px;background:#cce4f7;box-shadow:inset 0 0 0 1px #9fcff7;"></div>
<div class="a" style="left:228.60px;top:285.40px;width:56.20px;height:21.90px;background:#cce4f7;box-shadow:inset 0 0 0 1px #9fcff7;"></div>
<div class="a" style="left:228.00px;top:285.40px;width:2.00px;height:21.90px;background:#a6d3f9;"></div>
<svg class="a" style="left:168.2px;top:289px" width="18" height="18" viewBox="0 0 18 18"><defs><linearGradient id="fg" x1="0" x2="1" y1="0" y2="0"><stop offset="0" stop-color="#6e6e6e"/><stop offset="0.5" stop-color="#9a9a9a"/><stop offset="1" stop-color="#7a7a7a"/></linearGradient></defs><path d="M0.5 2.2 Q0.5 0.3 8.6 0.3 Q16.7 0.3 16.7 2.2 Q16.7 3.6 10.6 8.8 V15.6 L7 13.6 V8.8 Q0.5 3.6 0.5 2.2 Z" fill="url(#fg)"/><ellipse cx="8.6" cy="2" rx="7" ry="1.2" fill="#c4c4c4"/><circle cx="12.8" cy="14.2" r="3" fill="#fff" stroke="#4a86c5" stroke-width="1.1"/><path d="M12.8 12.6 V14.3 H14.2" fill="none" stroke="#4a86c5" stroke-width="0.9"/></svg>
<div class="t" style="top:294.01px;font-size:9.2px;line-height:9.2px;color:#000;transform:scaleX(0.8882);left:186.70px;transform-origin:0 0;">Historical</div>
<svg class="a" style="left:233.2px;top:289px" width="18" height="18" viewBox="0 0 18 18"><defs><linearGradient id="fg" x1="0" x2="1" y1="0" y2="0"><stop offset="0" stop-color="#6e6e6e"/><stop offset="0.5" stop-color="#9a9a9a"/><stop offset="1" stop-color="#7a7a7a"/></linearGradient></defs><path d="M0.5 2.2 Q0.5 0.3 8.6 0.3 Q16.7 0.3 16.7 2.2 Q16.7 3.6 10.6 8.8 V15.6 L7 13.6 V8.8 Q0.5 3.6 0.5 2.2 Z" fill="url(#fg)"/><ellipse cx="8.6" cy="2" rx="7" ry="1.2" fill="#c4c4c4"/><circle cx="12.8" cy="14.2" r="3" fill="#fff" stroke="#4a86c5" stroke-width="1.1"/><path d="M12.8 12.6 V14.3 H14.2" fill="none" stroke="#4a86c5" stroke-width="0.9"/></svg>
<div class="t" style="top:294.01px;font-size:9.2px;line-height:9.2px;color:#000;transform:scaleX(0.9779);left:251.00px;transform-origin:0 0;">Future</div>
<div class="t" style="top:318.61px;font-size:9.2px;line-height:9.2px;color:#000;transform:scaleX(0.8873);left:27.80px;transform-origin:0 0;">Price Factor</div>
<div class="a" style="left:77.40px;top:314.20px;width:77.20px;height:15.60px;background:#f0f0f0;box-shadow:inset 0 0 0 1px #d6d6d6;"></div>
<div class="t" style="top:318.61px;font-size:9.2px;line-height:9.2px;color:#8a8a8a;transform:scaleX(0.9022);right:848.80px;text-align:right;transform-origin:100% 0;">1</div>
<svg class="a" style="left:160px;top:317px" width="10" height="10" viewBox="0 0 10 10"><rect x="0.5" y="0.5" width="9" height="9" fill="#fff" stroke="#4d4d4d" stroke-width="1.05"/></svg>
<div class="t" style="top:318.41px;font-size:9.2px;line-height:9.2px;color:#000;transform:scaleX(0.8856);left:173.20px;transform-origin:0 0;">Discountable</div>
<div class="a" style="left:29.30px;top:335.50px;width:940.70px;height:159.30px;background:#fff;box-shadow:inset 0 0 0 1px #a0a3a8;"></div>
<div class="a" style="left:30.3px;top:353px;width:923.1px;height:140.80px;overflow:hidden">
<div class="a" style="left:0.00px;top:13.20px;width:923.10px;height:13.20px;background:#c2daf0;"></div>
<div class="a" style="left:45.70px;top:26.40px;width:87.00px;height:13.20px;background:#ffff80;"></div>
<div class="a" style="left:0.00px;top:39.60px;width:923.10px;height:13.20px;background:#ededed;"></div>
<div class="a" style="left:0.00px;top:66.00px;width:923.10px;height:13.20px;background:#ededed;"></div>
<div class="a" style="left:45.70px;top:66.00px;width:87.00px;height:13.20px;background:#ffff80;"></div>
<div class="a" style="left:0.00px;top:92.40px;width:923.10px;height:13.20px;background:#ededed;"></div>
<div class="a" style="left:45.70px;top:105.60px;width:87.00px;height:13.20px;background:#ffff80;"></div>
<div class="a" style="left:0.00px;top:118.80px;width:923.10px;height:13.20px;background:#ededed;"></div>
</div>
<div class="a" style="left:75.00px;top:336.50px;width:1.00px;height:157.30px;background:#e3e3e3;"></div>
<div class="a" style="left:163.00px;top:336.50px;width:1.00px;height:157.30px;background:#e3e3e3;"></div>
<div class="a" style="left:223.00px;top:336.50px;width:1.00px;height:157.30px;background:#e3e3e3;"></div>
<div class="a" style="left:285.00px;top:336.50px;width:1.00px;height:157.30px;background:#e3e3e3;"></div>
<div class="a" style="left:328.00px;top:336.50px;width:1.00px;height:157.30px;background:#e3e3e3;"></div>
<div class="a" style="left:358.00px;top:336.50px;width:1.00px;height:157.30px;background:#e3e3e3;"></div>
<div class="a" style="left:422.00px;top:336.50px;width:1.00px;height:157.30px;background:#e3e3e3;"></div>
<div class="a" style="left:494.00px;top:336.50px;width:1.00px;height:157.30px;background:#e3e3e3;"></div>
<div class="a" style="left:567.00px;top:336.50px;width:1.00px;height:157.30px;background:#e3e3e3;"></div>
<div class="a" style="left:623.00px;top:336.50px;width:1.00px;height:157.30px;background:#e3e3e3;"></div>
<div class="a" style="left:687.00px;top:336.50px;width:1.00px;height:157.30px;background:#e3e3e3;"></div>
<div class="a" style="left:753.00px;top:336.50px;width:1.00px;height:157.30px;background:#e3e3e3;"></div>
<div class="a" style="left:813.00px;top:336.50px;width:1.00px;height:157.30px;background:#e3e3e3;"></div>
<div class="a" style="left:881.00px;top:336.50px;width:1.00px;height:157.30px;background:#e3e3e3;"></div>
<div class="a" style="left:953.00px;top:336.50px;width:1.00px;height:157.30px;background:#e3e3e3;"></div>
<div class="t" style="top:340.41px;font-size:9.2px;line-height:9.2px;color:#000;transform:scaleX(0.8746);left:31.70px;transform-origin:0 0;">Price Level</div>
<div class="t" style="top:340.41px;font-size:9.2px;line-height:9.2px;color:#000;transform:scaleX(0.8790);left:78.50px;transform-origin:0 0;">Price Level Description</div>
<div class="t" style="top:340.41px;font-size:9.2px;line-height:9.2px;color:#000;transform:scaleX(0.8426);right:779.00px;text-align:right;transform-origin:100% 0;">Sell Price (EA)</div>
<div class="t" style="top:340.41px;font-size:9.2px;line-height:9.2px;color:#000;transform:scaleX(0.9352);left:226.60px;transform-origin:0 0;">Effective Date</div>
<div class="t" style="top:340.41px;font-size:9.2px;line-height:9.2px;color:#000;transform:scaleX(0.8950);left:289.00px;transform-origin:0 0;">Currency</div>
<div class="t" style="top:340.41px;font-size:9.2px;line-height:9.2px;color:#000;transform:scaleX(0.8526);left:331.00px;transform-origin:0 0;">Main</div>
<div class="t" style="top:340.41px;font-size:9.2px;line-height:9.2px;color:#000;transform:scaleX(0.9492);right:580.00px;text-align:right;transform-origin:100% 0;">Inventory Cost</div>
<div class="t" style="top:340.41px;font-size:9.2px;line-height:9.2px;color:#000;transform:scaleX(0.9370);right:508.50px;text-align:right;transform-origin:100% 0;">Inventory Margin</div>
<div class="t" style="top:340.41px;font-size:9.2px;line-height:9.2px;color:#000;transform:scaleX(0.9455);right:434.60px;text-align:right;transform-origin:100% 0;">Inventory Markup</div>
<div class="t" style="top:340.41px;font-size:9.2px;line-height:9.2px;color:#000;transform:scaleX(0.9186);right:379.20px;text-align:right;transform-origin:100% 0;">Current Cost</div>
<div class="t" style="top:340.41px;font-size:9.2px;line-height:9.2px;color:#000;transform:scaleX(0.9112);right:315.40px;text-align:right;transform-origin:100% 0;">Current Margin</div>
<div class="t" style="top:340.41px;font-size:9.2px;line-height:9.2px;color:#000;transform:scaleX(0.9076);right:249.00px;text-align:right;transform-origin:100% 0;">Current Markup</div>
<div class="t" style="top:340.41px;font-size:9.2px;line-height:9.2px;color:#000;transform:scaleX(0.9063);right:189.40px;text-align:right;transform-origin:100% 0;">Standard Cost</div>
<div class="t" style="top:340.41px;font-size:9.2px;line-height:9.2px;color:#000;transform:scaleX(0.9028);right:120.60px;text-align:right;transform-origin:100% 0;">Standard Margin</div>
<div class="t" style="top:340.41px;font-size:9.2px;line-height:9.2px;color:#000;transform:scaleX(0.9013);left:886.20px;transform-origin:0 0;">Standard Markup</div>
<div class="a" style="left:0;top:353px;width:1000px;height:140.80px;overflow:hidden">
<div class="t" style="top:2.36px;font-size:9.5px;line-height:9.5px;color:#000;transform:scaleX(0.8952);left:31.70px;transform-origin:0 0;">WS</div>
<div class="t" style="top:2.36px;font-size:9.5px;line-height:9.5px;color:#000;transform:scaleX(0.9357);left:78.50px;transform-origin:0 0;">Wholesale</div>
<div class="t" style="top:2.36px;font-size:9.5px;line-height:9.5px;color:#000;transform:scaleX(0.8737);right:778.40px;text-align:right;transform-origin:100% 0;">24.45</div>
<div class="t" style="top:2.36px;font-size:9.5px;line-height:9.5px;color:#000;transform:scaleX(0.8737);left:226.60px;transform-origin:0 0;">2024-07-01</div>
<svg class="a" style="left:331.4px;top:1.6px" width="10" height="10" viewBox="0 0 10 10"><rect x="0.5" y="0.5" width="9" height="9" fill="#fff" stroke="#4d4d4d" stroke-width="1.05"/></svg>
<div class="t" style="top:2.36px;font-size:9.5px;line-height:9.5px;color:#000;transform:scaleX(0.8737);right:579.20px;text-align:right;transform-origin:100% 0;">14.74</div>
<div class="t" style="top:2.36px;font-size:9.5px;line-height:9.5px;color:#000;transform:scaleX(0.8737);right:508.40px;text-align:right;transform-origin:100% 0;">39.71</div>
<div class="t" style="top:2.36px;font-size:9.5px;line-height:9.5px;color:#000;transform:scaleX(0.8737);right:434.60px;text-align:right;transform-origin:100% 0;">65.88</div>
<div class="t" style="top:2.36px;font-size:9.5px;line-height:9.5px;color:#000;transform:scaleX(0.8737);right:378.40px;text-align:right;transform-origin:100% 0;">14.74</div>
<div class="t" style="top:2.36px;font-size:9.5px;line-height:9.5px;color:#000;transform:scaleX(0.8737);right:315.30px;text-align:right;transform-origin:100% 0;">39.71</div>
<div class="t" style="top:2.36px;font-size:9.5px;line-height:9.5px;color:#000;transform:scaleX(0.8737);right:248.20px;text-align:right;transform-origin:100% 0;">65.88</div>
<div class="t" style="top:2.36px;font-size:9.5px;line-height:9.5px;color:#000;transform:scaleX(0.8737);right:188.40px;text-align:right;transform-origin:100% 0;">0.00</div>
<div class="t" style="top:2.36px;font-size:9.5px;line-height:9.5px;color:#000;transform:scaleX(0.8737);right:120.50px;text-align:right;transform-origin:100% 0;">100.00</div>
<div class="t" style="top:15.56px;font-size:9.5px;line-height:9.5px;color:#000;transform:scaleX(0.9895);left:31.70px;transform-origin:0 0;">MAIN</div>
<div class="t" style="top:15.56px;font-size:9.5px;line-height:9.5px;color:#000;transform:scaleX(0.9882);left:78.50px;transform-origin:0 0;">Main price</div>
<div class="t" style="top:15.56px;font-size:9.5px;line-height:9.5px;color:#000;transform:scaleX(0.8737);right:778.40px;text-align:right;transform-origin:100% 0;">25.00</div>
<div class="t" style="top:15.56px;font-size:9.5px;line-height:9.5px;color:#000;transform:scaleX(0.8737);left:226.60px;transform-origin:0 0;">2024-07-01</div>
<svg class="a" style="left:331.4px;top:14.799999999999999px" width="10" height="10" viewBox="0 0 10 10"><rect x="0.5" y="0.5" width="9" height="9" fill="#fff" stroke="#4d4d4d" stroke-width="1.05"/><path d="M1.9 4.9 L4 7 L8.3 2.7" fill="none" stroke="#595959" stroke-width="1.2"/></svg>
<div class="t" style="top:15.56px;font-size:9.5px;line-height:9.5px;color:#000;transform:scaleX(0.8737);right:579.20px;text-align:right;transform-origin:100% 0;">14.74</div>
<div class="t" style="top:15.56px;font-size:9.5px;line-height:9.5px;color:#000;transform:scaleX(0.8737);right:508.40px;text-align:right;transform-origin:100% 0;">41.04</div>
<div class="t" style="top:15.56px;font-size:9.5px;line-height:9.5px;color:#000;transform:scaleX(0.8737);right:434.60px;text-align:right;transform-origin:100% 0;">69.61</div>
<div class="t" style="top:15.56px;font-size:9.5px;line-height:9.5px;color:#000;transform:scaleX(0.8737);right:378.40px;text-align:right;transform-origin:100% 0;">14.74</div>
<div class="t" style="top:15.56px;font-size:9.5px;line-height:9.5px;color:#000;transform:scaleX(0.8737);right:315.30px;text-align:right;transform-origin:100% 0;">41.04</div>
<div class="t" style="top:15.56px;font-size:9.5px;line-height:9.5px;color:#000;transform:scaleX(0.8737);right:248.20px;text-align:right;transform-origin:100% 0;">69.61</div>
<div class="t" style="top:15.56px;font-size:9.5px;line-height:9.5px;color:#000;transform:scaleX(0.8737);right:188.40px;text-align:right;transform-origin:100% 0;">0.00</div>
<div class="t" style="top:15.56px;font-size:9.5px;line-height:9.5px;color:#000;transform:scaleX(0.8737);right:120.50px;text-align:right;transform-origin:100% 0;">100.00</div>
<div class="t" style="top:28.76px;font-size:9.5px;line-height:9.5px;color:#000;transform:scaleX(0.9474);left:31.70px;transform-origin:0 0;">US</div>
<div class="t" style="top:28.76px;font-size:9.5px;line-height:9.5px;color:#1a1ae6;transform:scaleX(0.9471);left:78.50px;transform-origin:0 0;">US Main price</div>
<div class="t" style="top:28.76px;font-size:9.5px;line-height:9.5px;color:#000;transform:scaleX(0.8737);right:778.40px;text-align:right;transform-origin:100% 0;">18.00</div>
<div class="t" style="top:28.76px;font-size:9.5px;line-height:9.5px;color:#000;transform:scaleX(0.8737);left:226.60px;transform-origin:0 0;">2024-07-01</div>
<div class="t" style="top:28.76px;font-size:9.5px;line-height:9.5px;color:#000;transform:scaleX(0.8974);left:289.00px;transform-origin:0 0;">USD</div>
<svg class="a" style="left:331.4px;top:28.0px" width="10" height="10" viewBox="0 0 10 10"><rect x="0.5" y="0.5" width="9" height="9" fill="#fff" stroke="#4d4d4d" stroke-width="1.05"/><path d="M1.9 4.9 L4 7 L8.3 2.7" fill="none" stroke="#595959" stroke-width="1.2"/></svg>
<div class="t" style="top:28.76px;font-size:9.5px;line-height:9.5px;color:#000;transform:scaleX(0.8737);right:579.20px;text-align:right;transform-origin:100% 0;">14.74</div>
<div class="t" style="top:28.76px;font-size:9.5px;line-height:9.5px;color:#000;transform:scaleX(0.8737);right:508.40px;text-align:right;transform-origin:100% 0;">34.49</div>
<div class="t" style="top:28.76px;font-size:9.5px;line-height:9.5px;color:#000;transform:scaleX(0.8737);right:434.60px;text-align:right;transform-origin:100% 0;">52.65</div>
<div class="t" style="top:28.76px;font-size:9.5px;line-height:9.5px;color:#000;transform:scaleX(0.8737);right:378.40px;text-align:right;transform-origin:100% 0;">14.74</div>
<div class="t" style="top:28.76px;font-size:9.5px;line-height:9.5px;color:#000;transform:scaleX(0.8737);right:315.30px;text-align:right;transform-origin:100% 0;">34.49</div>
<div class="t" style="top:28.76px;font-size:9.5px;line-height:9.5px;color:#000;transform:scaleX(0.8737);right:248.20px;text-align:right;transform-origin:100% 0;">52.65</div>
<div class="t" style="top:28.76px;font-size:9.5px;line-height:9.5px;color:#000;transform:scaleX(0.8737);right:188.40px;text-align:right;transform-origin:100% 0;">0.00</div>
<div class="t" style="top:28.76px;font-size:9.5px;line-height:9.5px;color:#000;transform:scaleX(0.8737);right:120.50px;text-align:right;transform-origin:100% 0;">100.00</div>
<div class="t" style="top:41.96px;font-size:9.5px;line-height:9.5px;color:#000;transform:scaleX(0.9895);left:31.70px;transform-origin:0 0;">MAIN</div>
<div class="t" style="top:41.96px;font-size:9.5px;line-height:9.5px;color:#000;transform:scaleX(0.9882);left:78.50px;transform-origin:0 0;">Main price</div>
<div class="t" style="top:41.96px;font-size:9.5px;line-height:9.5px;color:#000;transform:scaleX(0.8737);right:778.40px;text-align:right;transform-origin:100% 0;">24.50</div>
<div class="t" style="top:41.96px;font-size:9.5px;line-height:9.5px;color:#000;transform:scaleX(0.8737);left:226.60px;transform-origin:0 0;">2024-01-01</div>
<svg class="a" style="left:331.4px;top:41.199999999999996px" width="10" height="10" viewBox="0 0 10 10"><rect x="0.5" y="0.5" width="9" height="9" fill="#fff" stroke="#4d4d4d" stroke-width="1.05"/><path d="M1.9 4.9 L4 7 L8.3 2.7" fill="none" stroke="#595959" stroke-width="1.2"/></svg>
<div class="t" style="top:41.96px;font-size:9.5px;line-height:9.5px;color:#000;transform:scaleX(0.8737);right:579.20px;text-align:right;transform-origin:100% 0;">14.74</div>
<div class="t" style="top:41.96px;font-size:9.5px;line-height:9.5px;color:#000;transform:scaleX(0.8737);right:508.40px;text-align:right;transform-origin:100% 0;">39.84</div>
<div class="t" style="top:41.96px;font-size:9.5px;line-height:9.5px;color:#000;transform:scaleX(0.8737);right:434.60px;text-align:right;transform-origin:100% 0;">66.21</div>
<div class="t" style="top:41.96px;font-size:9.5px;line-height:9.5px;color:#000;transform:scaleX(0.8737);right:378.40px;text-align:right;transform-origin:100% 0;">14.74</div>
<div class="t" style="top:41.96px;font-size:9.5px;line-height:9.5px;color:#000;transform:scaleX(0.8737);right:315.30px;text-align:right;transform-origin:100% 0;">39.84</div>
<div class="t" style="top:41.96px;font-size:9.5px;line-height:9.5px;color:#000;transform:scaleX(0.8737);right:248.20px;text-align:right;transform-origin:100% 0;">66.21</div>
<div class="t" style="top:41.96px;font-size:9.5px;line-height:9.5px;color:#000;transform:scaleX(0.8737);right:188.40px;text-align:right;transform-origin:100% 0;">0.00</div>
<div class="t" style="top:41.96px;font-size:9.5px;line-height:9.5px;color:#000;transform:scaleX(0.8737);right:120.50px;text-align:right;transform-origin:100% 0;">100.00</div>
<div class="t" style="top:55.16px;font-size:9.5px;line-height:9.5px;color:#000;transform:scaleX(0.8952);left:31.70px;transform-origin:0 0;">WS</div>
<div class="t" style="top:55.16px;font-size:9.5px;line-height:9.5px;color:#000;transform:scaleX(0.9357);left:78.50px;transform-origin:0 0;">Wholesale</div>
<div class="t" style="top:55.16px;font-size:9.5px;line-height:9.5px;color:#000;transform:scaleX(0.8737);right:778.40px;text-align:right;transform-origin:100% 0;">23.40</div>
<div class="t" style="top:55.16px;font-size:9.5px;line-height:9.5px;color:#000;transform:scaleX(0.8737);left:226.60px;transform-origin:0 0;">2024-01-01</div>
<svg class="a" style="left:331.4px;top:54.4px" width="10" height="10" viewBox="0 0 10 10"><rect x="0.5" y="0.5" width="9" height="9" fill="#fff" stroke="#4d4d4d" stroke-width="1.05"/></svg>
<div class="t" style="top:55.16px;font-size:9.5px;line-height:9.5px;color:#000;transform:scaleX(0.8737);right:579.20px;text-align:right;transform-origin:100% 0;">14.74</div>
<div class="t" style="top:55.16px;font-size:9.5px;line-height:9.5px;color:#000;transform:scaleX(0.8737);right:508.40px;text-align:right;transform-origin:100% 0;">37.01</div>
<div class="t" style="top:55.16px;font-size:9.5px;line-height:9.5px;color:#000;transform:scaleX(0.8737);right:434.60px;text-align:right;transform-origin:100% 0;">58.75</div>
<div class="t" style="top:55.16px;font-size:9.5px;line-height:9.5px;color:#000;transform:scaleX(0.8737);right:378.40px;text-align:right;transform-origin:100% 0;">14.74</div>
<div class="t" style="top:55.16px;font-size:9.5px;line-height:9.5px;color:#000;transform:scaleX(0.8737);right:315.30px;text-align:right;transform-origin:100% 0;">37.01</div>
<div class="t" style="top:55.16px;font-size:9.5px;line-height:9.5px;color:#000;transform:scaleX(0.8737);right:248.20px;text-align:right;transform-origin:100% 0;">58.75</div>
<div class="t" style="top:55.16px;font-size:9.5px;line-height:9.5px;color:#000;transform:scaleX(0.8737);right:188.40px;text-align:right;transform-origin:100% 0;">0.00</div>
<div class="t" style="top:55.16px;font-size:9.5px;line-height:9.5px;color:#000;transform:scaleX(0.8737);right:120.50px;text-align:right;transform-origin:100% 0;">100.00</div>
<div class="t" style="top:68.36px;font-size:9.5px;line-height:9.5px;color:#000;transform:scaleX(0.9474);left:31.70px;transform-origin:0 0;">US</div>
<div class="t" style="top:68.36px;font-size:9.5px;line-height:9.5px;color:#1a1ae6;transform:scaleX(0.9471);left:78.50px;transform-origin:0 0;">US Main price</div>
<div class="t" style="top:68.36px;font-size:9.5px;line-height:9.5px;color:#000;transform:scaleX(0.8737);right:778.40px;text-align:right;transform-origin:100% 0;">17.00</div>
<div class="t" style="top:68.36px;font-size:9.5px;line-height:9.5px;color:#000;transform:scaleX(0.8737);left:226.60px;transform-origin:0 0;">2024-01-01</div>
<div class="t" style="top:68.36px;font-size:9.5px;line-height:9.5px;color:#000;transform:scaleX(0.8974);left:289.00px;transform-origin:0 0;">USD</div>
<svg class="a" style="left:331.4px;top:67.6px" width="10" height="10" viewBox="0 0 10 10"><rect x="0.5" y="0.5" width="9" height="9" fill="#fff" stroke="#4d4d4d" stroke-width="1.05"/><path d="M1.9 4.9 L4 7 L8.3 2.7" fill="none" stroke="#595959" stroke-width="1.2"/></svg>
<div class="t" style="top:68.36px;font-size:9.5px;line-height:9.5px;color:#000;transform:scaleX(0.8737);right:579.20px;text-align:right;transform-origin:100% 0;">14.74</div>
<div class="t" style="top:68.36px;font-size:9.5px;line-height:9.5px;color:#000;transform:scaleX(0.8737);right:508.40px;text-align:right;transform-origin:100% 0;">30.64</div>
<div class="t" style="top:68.36px;font-size:9.5px;line-height:9.5px;color:#000;transform:scaleX(0.8737);right:434.60px;text-align:right;transform-origin:100% 0;">44.17</div>
<div class="t" style="top:68.36px;font-size:9.5px;line-height:9.5px;color:#000;transform:scaleX(0.8737);right:378.40px;text-align:right;transform-origin:100% 0;">14.74</div>
<div class="t" style="top:68.36px;font-size:9.5px;line-height:9.5px;color:#000;transform:scaleX(0.8737);right:315.30px;text-align:right;transform-origin:100% 0;">30.64</div>
<div class="t" style="top:68.36px;font-size:9.5px;line-height:9.5px;color:#000;transform:scaleX(0.8737);right:248.20px;text-align:right;transform-origin:100% 0;">44.17</div>
<div class="t" style="top:68.36px;font-size:9.5px;line-height:9.5px;color:#000;transform:scaleX(0.8737);right:188.40px;text-align:right;transform-origin:100% 0;">0.00</div>
<div class="t" style="top:68.36px;font-size:9.5px;line-height:9.5px;color:#000;transform:scaleX(0.8737);right:120.50px;text-align:right;transform-origin:100% 0;">100.00</div>
<div class="t" style="top:81.56px;font-size:9.5px;line-height:9.5px;color:#000;transform:scaleX(0.9895);left:31.70px;transform-origin:0 0;">MAIN</div>
<div class="t" style="top:81.56px;font-size:9.5px;line-height:9.5px;color:#000;transform:scaleX(0.9882);left:78.50px;transform-origin:0 0;">Main price</div>
<div class="t" style="top:81.56px;font-size:9.5px;line-height:9.5px;color:#000;transform:scaleX(0.8737);right:778.40px;text-align:right;transform-origin:100% 0;">23.50</div>
<div class="t" style="top:81.56px;font-size:9.5px;line-height:9.5px;color:#000;transform:scaleX(0.8737);left:226.60px;transform-origin:0 0;">2023-07-01</div>
<svg class="a" style="left:331.4px;top:80.79999999999998px" width="10" height="10" viewBox="0 0 10 10"><rect x="0.5" y="0.5" width="9" height="9" fill="#fff" stroke="#4d4d4d" stroke-width="1.05"/><path d="M1.9 4.9 L4 7 L8.3 2.7" fill="none" stroke="#595959" stroke-width="1.2"/></svg>
<div class="t" style="top:81.56px;font-size:9.5px;line-height:9.5px;color:#000;transform:scaleX(0.8737);right:579.20px;text-align:right;transform-origin:100% 0;">14.74</div>
<div class="t" style="top:81.56px;font-size:9.5px;line-height:9.5px;color:#000;transform:scaleX(0.8737);right:508.40px;text-align:right;transform-origin:100% 0;">37.28</div>
<div class="t" style="top:81.56px;font-size:9.5px;line-height:9.5px;color:#000;transform:scaleX(0.8737);right:434.60px;text-align:right;transform-origin:100% 0;">59.43</div>
<div class="t" style="top:81.56px;font-size:9.5px;line-height:9.5px;color:#000;transform:scaleX(0.8737);right:378.40px;text-align:right;transform-origin:100% 0;">14.74</div>
<div class="t" style="top:81.56px;font-size:9.5px;line-height:9.5px;color:#000;transform:scaleX(0.8737);right:315.30px;text-align:right;transform-origin:100% 0;">37.28</div>
<div class="t" style="top:81.56px;font-size:9.5px;line-height:9.5px;color:#000;transform:scaleX(0.8737);right:248.20px;text-align:right;transform-origin:100% 0;">59.43</div>
<div class="t" style="top:81.56px;font-size:9.5px;line-height:9.5px;color:#000;transform:scaleX(0.8737);right:188.40px;text-align:right;transform-origin:100% 0;">0.00</div>
<div class="t" style="top:81.56px;font-size:9.5px;line-height:9.5px;color:#000;transform:scaleX(0.8737);right:120.50px;text-align:right;transform-origin:100% 0;">100.00</div>
<div class="t" style="top:94.76px;font-size:9.5px;line-height:9.5px;color:#000;transform:scaleX(0.8952);left:31.70px;transform-origin:0 0;">WS</div>
<div class="t" style="top:94.76px;font-size:9.5px;line-height:9.5px;color:#000;transform:scaleX(0.9357);left:78.50px;transform-origin:0 0;">Wholesale</div>
<div class="t" style="top:94.76px;font-size:9.5px;line-height:9.5px;color:#000;transform:scaleX(0.8737);right:778.40px;text-align:right;transform-origin:100% 0;">22.30</div>
<div class="t" style="top:94.76px;font-size:9.5px;line-height:9.5px;color:#000;transform:scaleX(0.8737);left:226.60px;transform-origin:0 0;">2023-07-01</div>
<svg class="a" style="left:331.4px;top:93.99999999999999px" width="10" height="10" viewBox="0 0 10 10"><rect x="0.5" y="0.5" width="9" height="9" fill="#fff" stroke="#4d4d4d" stroke-width="1.05"/></svg>
<div class="t" style="top:94.76px;font-size:9.5px;line-height:9.5px;color:#000;transform:scaleX(0.8737);right:579.20px;text-align:right;transform-origin:100% 0;">14.74</div>
<div class="t" style="top:94.76px;font-size:9.5px;line-height:9.5px;color:#000;transform:scaleX(0.8737);right:508.40px;text-align:right;transform-origin:100% 0;">33.90</div>
<div class="t" style="top:94.76px;font-size:9.5px;line-height:9.5px;color:#000;transform:scaleX(0.8737);right:434.60px;text-align:right;transform-origin:100% 0;">51.29</div>
<div class="t" style="top:94.76px;font-size:9.5px;line-height:9.5px;color:#000;transform:scaleX(0.8737);right:378.40px;text-align:right;transform-origin:100% 0;">14.74</div>
<div class="t" style="top:94.76px;font-size:9.5px;line-height:9.5px;color:#000;transform:scaleX(0.8737);right:315.30px;text-align:right;transform-origin:100% 0;">33.90</div>
<div class="t" style="top:94.76px;font-size:9.5px;line-height:9.5px;color:#000;transform:scaleX(0.8737);right:248.20px;text-align:right;transform-origin:100% 0;">51.29</div>
<div class="t" style="top:94.76px;font-size:9.5px;line-height:9.5px;color:#000;transform:scaleX(0.8737);right:188.40px;text-align:right;transform-origin:100% 0;">0.00</div>
<div class="t" style="top:94.76px;font-size:9.5px;line-height:9.5px;color:#000;transform:scaleX(0.8737);right:120.50px;text-align:right;transform-origin:100% 0;">100.00</div>
<div class="t" style="top:107.96px;font-size:9.5px;line-height:9.5px;color:#000;transform:scaleX(0.9474);left:31.70px;transform-origin:0 0;">US</div>
<div class="t" style="top:107.96px;font-size:9.5px;line-height:9.5px;color:#1a1ae6;transform:scaleX(0.9471);left:78.50px;transform-origin:0 0;">US Main price</div>
<div class="t" style="top:107.96px;font-size:9.5px;line-height:9.5px;color:#000;transform:scaleX(0.8737);right:778.40px;text-align:right;transform-origin:100% 0;">16.50</div>
<div class="t" style="top:107.96px;font-size:9.5px;line-height:9.5px;color:#000;transform:scaleX(0.8737);left:226.60px;transform-origin:0 0;">2023-07-01</div>
<div class="t" style="top:107.96px;font-size:9.5px;line-height:9.5px;color:#000;transform:scaleX(0.8974);left:289.00px;transform-origin:0 0;">USD</div>
<svg class="a" style="left:331.4px;top:107.19999999999999px" width="10" height="10" viewBox="0 0 10 10"><rect x="0.5" y="0.5" width="9" height="9" fill="#fff" stroke="#4d4d4d" stroke-width="1.05"/><path d="M1.9 4.9 L4 7 L8.3 2.7" fill="none" stroke="#595959" stroke-width="1.2"/></svg>
<div class="t" style="top:107.96px;font-size:9.5px;line-height:9.5px;color:#000;transform:scaleX(0.8737);right:579.20px;text-align:right;transform-origin:100% 0;">14.74</div>
<div class="t" style="top:107.96px;font-size:9.5px;line-height:9.5px;color:#000;transform:scaleX(0.8737);right:508.40px;text-align:right;transform-origin:100% 0;">28.53</div>
<div class="t" style="top:107.96px;font-size:9.5px;line-height:9.5px;color:#000;transform:scaleX(0.8737);right:434.60px;text-align:right;transform-origin:100% 0;">39.93</div>
<div class="t" style="top:107.96px;font-size:9.5px;line-height:9.5px;color:#000;transform:scaleX(0.8737);right:378.40px;text-align:right;transform-origin:100% 0;">14.74</div>
<div class="t" style="top:107.96px;font-size:9.5px;line-height:9.5px;color:#000;transform:scaleX(0.8737);right:315.30px;text-align:right;transform-origin:100% 0;">28.53</div>
<div class="t" style="top:107.96px;font-size:9.5px;line-height:9.5px;color:#000;transform:scaleX(0.8737);right:248.20px;text-align:right;transform-origin:100% 0;">39.93</div>
<div class="t" style="top:107.96px;font-size:9.5px;line-height:9.5px;color:#000;transform:scaleX(0.8737);right:188.40px;text-align:right;transform-origin:100% 0;">0.00</div>
<div class="t" style="top:107.96px;font-size:9.5px;line-height:9.5px;color:#000;transform:scaleX(0.8737);right:120.50px;text-align:right;transform-origin:100% 0;">100.00</div>
<div class="t" style="top:121.16px;font-size:9.5px;line-height:9.5px;color:#000;transform:scaleX(0.9895);left:31.70px;transform-origin:0 0;">MAIN</div>
<div class="t" style="top:121.16px;font-size:9.5px;line-height:9.5px;color:#000;transform:scaleX(0.9882);left:78.50px;transform-origin:0 0;">Main price</div>
<div class="t" style="top:121.16px;font-size:9.5px;line-height:9.5px;color:#000;transform:scaleX(0.8737);right:778.40px;text-align:right;transform-origin:100% 0;">22.00</div>
<svg class="a" style="left:331.4px;top:120.39999999999999px" width="10" height="10" viewBox="0 0 10 10"><rect x="0.5" y="0.5" width="9" height="9" fill="#fff" stroke="#4d4d4d" stroke-width="1.05"/><path d="M1.9 4.9 L4 7 L8.3 2.7" fill="none" stroke="#595959" stroke-width="1.2"/></svg>
<div class="t" style="top:121.16px;font-size:9.5px;line-height:9.5px;color:#000;transform:scaleX(0.8737);right:579.20px;text-align:right;transform-origin:100% 0;">14.74</div>
<div class="t" style="top:121.16px;font-size:9.5px;line-height:9.5px;color:#000;transform:scaleX(0.8737);right:508.40px;text-align:right;transform-origin:100% 0;">33.00</div>
<div class="t" style="top:121.16px;font-size:9.5px;line-height:9.5px;color:#000;transform:scaleX(0.8737);right:434.60px;text-align:right;transform-origin:100% 0;">49.25</div>
<div class="t" style="top:121.16px;font-size:9.5px;line-height:9.5px;color:#000;transform:scaleX(0.8737);right:378.40px;text-align:right;transform-origin:100% 0;">14.74</div>
<div class="t" style="top:121.16px;font-size:9.5px;line-height:9.5px;color:#000;transform:scaleX(0.8737);right:315.30px;text-align:right;transform-origin:100% 0;">33.00</div>
<div class="t" style="top:121.16px;font-size:9.5px;line-height:9.5px;color:#000;transform:scaleX(0.8737);right:248.20px;text-align:right;transform-origin:100% 0;">49.25</div>
<div class="t" style="top:121.16px;font-size:9.5px;line-height:9.5px;color:#000;transform:scaleX(0.8737);right:188.40px;text-align:right;transform-origin:100% 0;">0.00</div>
<div class="t" style="top:121.16px;font-size:9.5px;line-height:9.5px;color:#000;transform:scaleX(0.8737);right:120.50px;text-align:right;transform-origin:100% 0;">100.00</div>
<div class="t" style="top:134.36px;font-size:9.5px;line-height:9.5px;color:#000;transform:scaleX(0.8952);left:31.70px;transform-origin:0 0;">WS</div>
<div class="t" style="top:134.36px;font-size:9.5px;line-height:9.5px;color:#000;transform:scaleX(0.9357);left:78.50px;transform-origin:0 0;">Wholesale</div>
<div class="t" style="top:134.36px;font-size:9.5px;line-height:9.5px;color:#000;transform:scaleX(0.8737);right:778.40px;text-align:right;transform-origin:100% 0;">21.20</div>
<svg class="a" style="left:331.4px;top:133.6px" width="10" height="10" viewBox="0 0 10 10"><rect x="0.5" y="0.5" width="9" height="9" fill="#fff" stroke="#4d4d4d" stroke-width="1.05"/></svg>
<div class="t" style="top:134.36px;font-size:9.5px;line-height:9.5px;color:#000;transform:scaleX(0.8737);right:579.20px;text-align:right;transform-origin:100% 0;">14.74</div>
<div class="t" style="top:134.36px;font-size:9.5px;line-height:9.5px;color:#000;transform:scaleX(0.8737);right:508.40px;text-align:right;transform-origin:100% 0;">30.47</div>
<div class="t" style="top:134.36px;font-size:9.5px;line-height:9.5px;color:#000;transform:scaleX(0.8737);right:434.60px;text-align:right;transform-origin:100% 0;">43.83</div>
<div class="t" style="top:134.36px;font-size:9.5px;line-height:9.5px;color:#000;transform:scaleX(0.8737);right:378.40px;text-align:right;transform-origin:100% 0;">14.74</div>
<div class="t" style="top:134.36px;font-size:9.5px;line-height:9.5px;color:#000;transform:scaleX(0.8737);right:315.30px;text-align:right;transform-origin:100% 0;">30.47</div>
<div class="t" style="top:134.36px;font-size:9.5px;line-height:9.5px;color:#000;transform:scaleX(0.8737);right:248.20px;text-align:right;transform-origin:100% 0;">43.83</div>
<div class="t" style="top:134.36px;font-size:9.5px;line-height:9.5px;color:#000;transform:scaleX(0.8737);right:188.40px;text-align:right;transform-origin:100% 0;">0.00</div>
<div class="t" style="top:134.36px;font-size:9.5px;line-height:9.5px;color:#000;transform:scaleX(0.8737);right:120.50px;text-align:right;transform-origin:100% 0;">100.00</div>
</div>
<div class="a" style="left:954.60px;top:336.50px;width:14.40px;height:157.30px;background:#f0f0f0;"></div>
<div class="a" style="left:957.00px;top:348.80px;width:11.00px;height:109.50px;background:#cdcdcd;"></div>
<svg class="a" style="left:958px;top:339px" width="9" height="6" viewBox="0 0 9 6"><path d="M1 4.6 L4.4 1.2 L7.8 4.6" fill="none" stroke="#606060" stroke-width="1.4"/></svg>
<svg class="a" style="left:958px;top:485px" width="9" height="6" viewBox="0 0 9 6"><path d="M1 1.2 L4.4 4.6 L7.8 1.2" fill="none" stroke="#606060" stroke-width="1.4"/></svg>
<div class="t" style="top:526.01px;font-size:9.2px;line-height:9.2px;color:#000;transform:scaleX(0.8827);left:17.40px;transform-origin:0 0;">On Hand</div>
<div class="a" style="left:55.00px;top:521.00px;width:148.60px;height:15.40px;background:#f0f0f0;box-shadow:inset 1px 1px 0 #a0a0a0, inset -1px -1px 0 #c8c8c8;"></div>
<div class="t" style="top:526.01px;font-size:9.2px;line-height:9.2px;color:#000;transform:scaleX(0.9022);right:800.40px;text-align:right;transform-origin:100% 0;">36.000</div>
<div class="t" style="top:526.01px;font-size:9.2px;line-height:9.2px;color:#000;transform:scaleX(0.8769);left:207.80px;transform-origin:0 0;">Committed</div>
<div class="a" style="left:252.60px;top:521.00px;width:149.40px;height:15.40px;background:#f0f0f0;box-shadow:inset 1px 1px 0 #a0a0a0, inset -1px -1px 0 #c8c8c8;"></div>
<div class="t" style="top:526.01px;font-size:9.2px;line-height:9.2px;color:#000;transform:scaleX(0.9022);right:602.00px;text-align:right;transform-origin:100% 0;">1.000</div>
<div class="t" style="top:526.01px;font-size:9.2px;line-height:9.2px;color:#000;transform:scaleX(0.8705);left:406.00px;transform-origin:0 0;">Backorder</div>
<div class="a" style="left:448.00px;top:521.00px;width:150.20px;height:15.40px;background:#f0f0f0;box-shadow:inset 1px 1px 0 #a0a0a0, inset -1px -1px 0 #c8c8c8;"></div>
<div class="t" style="top:526.01px;font-size:9.2px;line-height:9.2px;color:#000;transform:scaleX(0.9022);right:405.80px;text-align:right;transform-origin:100% 0;">0.000</div>
<div class="t" style="top:526.01px;font-size:9.2px;line-height:9.2px;color:#000;transform:scaleX(0.9076);left:602.20px;transform-origin:0 0;">On Order</div>
<div class="a" style="left:642.00px;top:521.00px;width:148.60px;height:15.40px;background:#f0f0f0;box-shadow:inset 1px 1px 0 #a0a0a0, inset -1px -1px 0 #c8c8c8;"></div>
<div class="t" style="top:526.01px;font-size:9.2px;line-height:9.2px;color:#000;transform:scaleX(0.9022);right:213.40px;text-align:right;transform-origin:100% 0;">0.000</div>
<div class="t" style="top:526.01px;font-size:9.2px;line-height:9.2px;color:#000;transform:scaleX(0.8825);left:795.20px;transform-origin:0 0;">Available</div>
<div class="a" style="left:833.20px;top:521.00px;width:149.00px;height:15.40px;background:#f0f0f0;box-shadow:inset 1px 1px 0 #a0a0a0, inset -1px -1px 0 #c8c8c8;"></div>
<div class="t" style="top:526.01px;font-size:9.2px;line-height:9.2px;color:#000;transform:scaleX(0.9022);right:21.80px;text-align:right;transform-origin:100% 0;">35.000</div>
<div class="t" style="top:548.75px;font-size:8.8px;line-height:8.8px;color:#000;transform:scaleX(0.9580);right:180.40px;text-align:right;transform-origin:100% 0;">Created by SS on 2014-08-25 9:50:16 AM</div>
<div class="a" style="left:820.60px;top:546.00px;width:1.00px;height:13.00px;background:#d0d0d0;"></div>
<div class="t" style="top:548.75px;font-size:8.8px;line-height:8.8px;color:#000;transform:scaleX(0.9509);left:823.40px;transform-origin:0 0;">Modified by WF on 2024-06-20 2:25:29 PM</div>
<div class="a" style="left:985.00px;top:546.00px;width:1.00px;height:13.00px;background:#d0d0d0;"></div>
<div class="a" style="left:996.00px;top:550.00px;width:1.20px;height:1.20px;background:#a0a0a0;"></div>
<div class="a" style="left:993.00px;top:553.00px;width:1.20px;height:1.20px;background:#a0a0a0;"></div>
<div class="a" style="left:996.00px;top:553.00px;width:1.20px;height:1.20px;background:#a0a0a0;"></div>
<div class="a" style="left:990.00px;top:556.00px;width:1.20px;height:1.20px;background:#a0a0a0;"></div>
<div class="a" style="left:993.00px;top:556.00px;width:1.20px;height:1.20px;background:#a0a0a0;"></div>
<div class="a" style="left:996.00px;top:556.00px;width:1.20px;height:1.20px;background:#a0a0a0;"></div>
</body></html>
